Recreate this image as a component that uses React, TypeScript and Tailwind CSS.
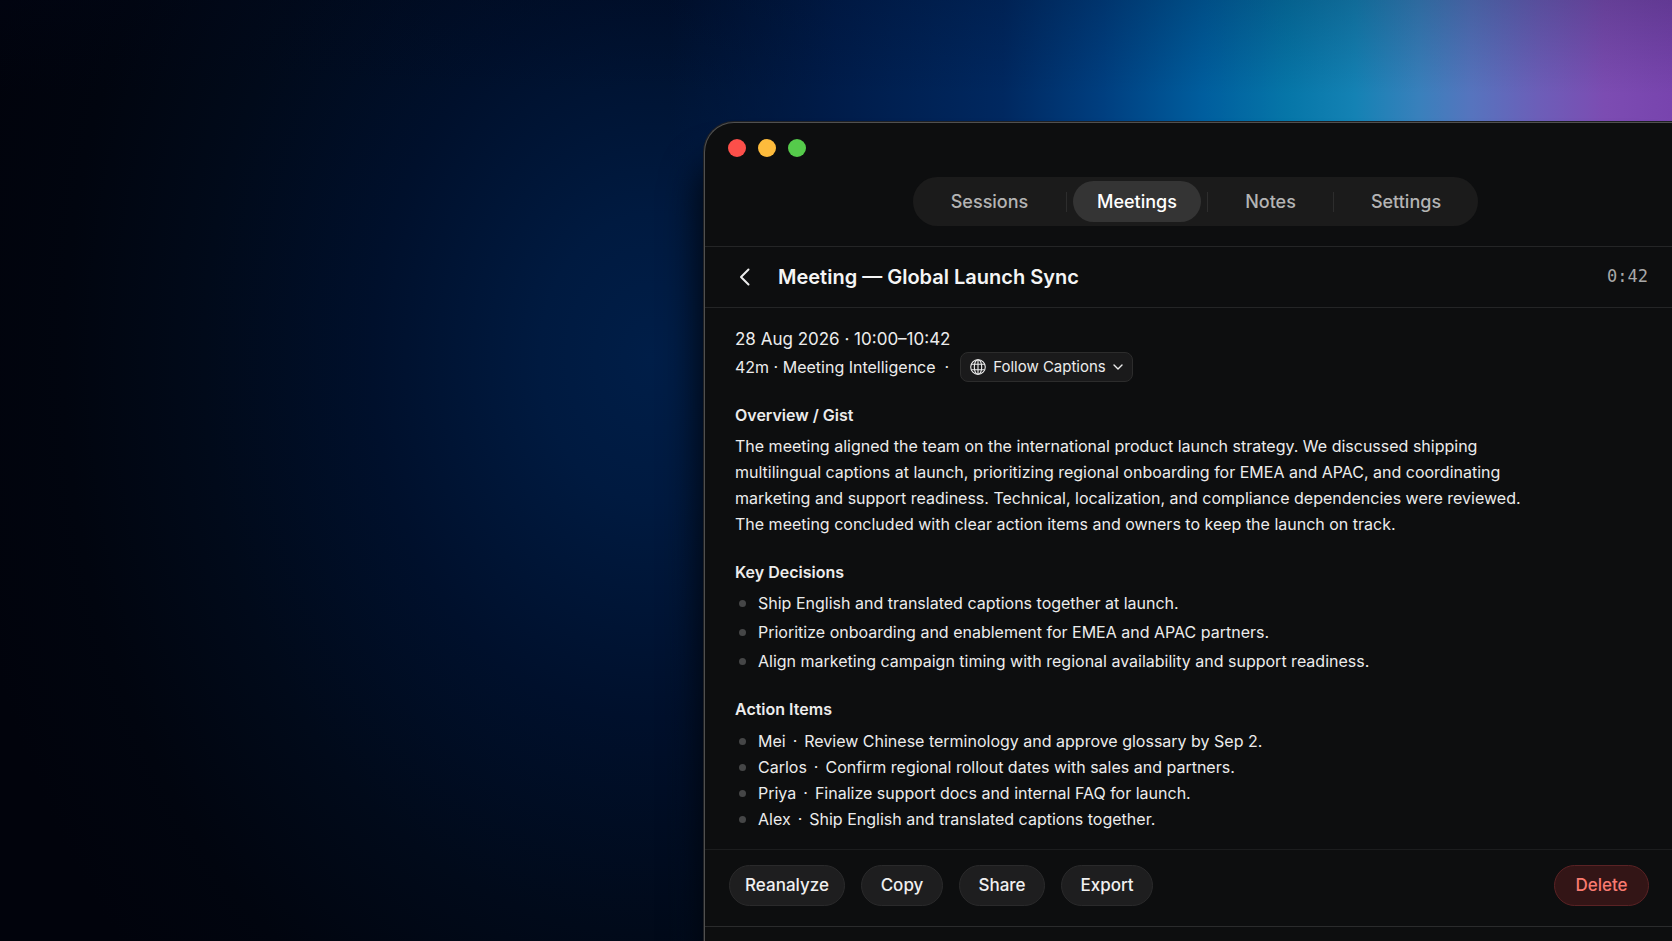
import { useState } from 'react';

const TABS = [
  { name: 'Sessions', width: 'w-[153px]' },
  { name: 'Meetings', width: 'w-[128px]' },
  { name: 'Notes', width: 'w-[125px]' },
  { name: 'Settings', width: 'w-[144px]' },
];

const DECISIONS = [
  'Ship English and translated captions together at launch.',
  'Prioritize onboarding and enablement for EMEA and APAC partners.',
  'Align marketing campaign timing with regional availability and support readiness.',
];

const ACTION_ITEMS = [
  { owner: 'Mei', task: 'Review Chinese terminology and approve glossary by Sep 2.' },
  { owner: 'Carlos', task: 'Confirm regional rollout dates with sales and partners.' },
  { owner: 'Priya', task: 'Finalize support docs and internal FAQ for launch.' },
  { owner: 'Alex', task: 'Ship English and translated captions together.' },
];

const ACTIONS = [
  { name: 'Reanalyze', width: 'w-[116px]' },
  { name: 'Copy', width: 'w-[82px]' },
  { name: 'Share', width: 'w-[86px]' },
  { name: 'Export', width: 'w-[92px]' },
];

function Globe() {
  return (
    <svg viewBox="0 0 16 16" className="h-4 w-4" fill="none" stroke="currentColor" strokeWidth="1.1" aria-hidden="true">
      <circle cx="8" cy="8" r="7.3" />
      <ellipse cx="8" cy="8" rx="3.7" ry="7.3" />
      <path d="M8 .7v14.6M1.4 5.2h13.2M1.4 10.8h13.2" />
    </svg>
  );
}

function Chevron() {
  return (
    <svg viewBox="0 0 10 6" className="h-[6px] w-[10px]" fill="none" stroke="currentColor" strokeWidth="1.4" strokeLinecap="round" strokeLinejoin="round" aria-hidden="true">
      <path d="M1 1l4 4 4-4" />
    </svg>
  );
}

function Bullet() {
  return <span className="ml-1 mr-3 h-[7px] w-[7px] shrink-0 rounded-full bg-[#454647]" />;
}

export default function App() {
  const [tab, setTab] = useState('Meetings');

  return (
    <div className="flex min-h-screen flex-col overflow-hidden bg-[#01030c] bg-[linear-gradient(180deg,#00082030_0%,transparent_10%),linear-gradient(90deg,transparent_40%,#001c4a_50%,#002860_60%,#003f80_66%,#005e9e_72%,#0676a8_77%,#1482b4_81%,#3a80bc_85%,#5674be_88%,#6c5eb8_92%,#7c4cb2_96%,#7844ae_100%),radial-gradient(ellipse_700px_900px_at_39%_38%,#001e48_0%,#001a40_16%,#00102c_40%,#010a1a_64%,#01050f_84%,transparent_100%)] pl-8 pt-[122px] font-['Inter',sans-serif] text-[#ececec] antialiased lg:pl-[704px]">
      <main className="flex flex-1 flex-col rounded-tl-[30px] border-l border-t border-[#505050] bg-[#0d0e0f] shadow-[0_0_0_1px_#1e2024,-6px_40px_36px_0_#000000c0]">
        <header className="border-b border-[#242526]">
          <div className="flex gap-3 px-[23px] pt-4">
            <button aria-label="Close" className="h-[18px] w-[18px] rounded-full bg-[#fc4f4a]" />
            <button aria-label="Minimize" className="h-[18px] w-[18px] rounded-full bg-[#fdbb3c]" />
            <button aria-label="Zoom" className="h-[18px] w-[18px] rounded-full bg-[#55cb4b]" />
          </div>
          <div className="flex justify-center py-5 pl-3.5">
            <nav className="flex h-[49px] items-center rounded-full bg-[#1b1b1b]">
              {TABS.map((t, i) => (
                <div key={t.name} className="flex items-center">
                  {i > 0 && <span className={`h-5 w-px bg-[#2d2d2d] ${i === 1 ? 'mr-1.5' : i === 2 ? 'ml-1.5' : ''}`} />}
                  <button
                    onClick={() => setTab(t.name)}
                    className={`h-[41px] rounded-full text-lg font-medium ${t.width} ${tab === t.name ? 'bg-[#343434] text-white' : 'text-[#b4b4b4]'}`}
                  >
                    {t.name}
                  </button>
                </div>
              ))}
            </nav>
          </div>
        </header>

        <div className="flex h-[61px] items-center border-b border-[#242526] pl-[34px] pr-6">
          <button aria-label="Back" className="text-[#ececec]">
            <svg viewBox="0 0 12 18" className="h-[18px] w-3" fill="none" stroke="currentColor" strokeWidth="2" strokeLinecap="round" strokeLinejoin="round">
              <path d="M9.5 1.5L2 9l7.5 7.5" />
            </svg>
          </button>
          <h1 className="ml-[27px] text-xl font-semibold text-[#f5f5f5]">Meeting — Global Launch Sync</h1>
          <time className="ml-auto font-['DejaVu_Sans_Mono',monospace] text-[17px] text-[#a8a8a8]">0:42</time>
        </div>

        <article className="px-[30px] pb-[17px] pt-[18px] text-base/[26px]">
          <p className="text-[17px]/[26px]">28 Aug 2026 · 10:00–10:42</p>
          <div className="flex items-center">
            <p className="whitespace-pre">42m · Meeting Intelligence  ·</p>
            <button className="ml-[11px] flex h-[30px] items-center gap-[7px] rounded-lg border border-[#2c2c2c] bg-[#1a1a1b] px-[9px] text-[15px]">
              <Globe />
              Follow Captions
              <Chevron />
            </button>
          </div>

          <section className="mt-5">
            <h2 className="font-semibold">Overview / Gist</h2>
            <p className="mt-[5px] max-w-[790px]">
              The meeting aligned the team on the international product launch strategy. We discussed shipping
              multilingual captions at launch, prioritizing regional onboarding for EMEA and APAC, and coordinating
              marketing and support readiness. Technical, localization, and compliance dependencies were reviewed.
              The meeting concluded with clear action items and owners to keep the launch on track.
            </p>
          </section>

          <section className="mt-[22px]">
            <h2 className="font-semibold">Key Decisions</h2>
            <ul className="mt-1">
              {DECISIONS.map(text => (
                <li key={text} className="flex items-center leading-[29px]">
                  <Bullet />
                  {text}
                </li>
              ))}
            </ul>
          </section>

          <section className="mt-5">
            <h2 className="font-semibold">Action Items</h2>
            <ul className="mt-1.5">
              {ACTION_ITEMS.map(item => (
                <li key={item.owner} className="flex items-center">
                  <Bullet />
                  {item.owner}
                  <span className="mx-[7px]">·</span>
                  {item.task}
                </li>
              ))}
            </ul>
          </section>
        </article>

        <footer className="flex items-center gap-4 border-b border-t border-b-[#2a2b2c] border-t-[#1c1d1e] pb-5 pl-6 pr-[23px] pt-[15px] text-[17px] font-medium">
          {ACTIONS.map(action => (
            <button key={action.name} className={`h-[41px] rounded-full border border-[#2a2a2b] bg-[#1e1e1f] text-[#f0f0f0] ${action.width}`}>
              {action.name}
            </button>
          ))}
          <button className="ml-auto h-[41px] w-[95px] rounded-full border border-[#5a2224] bg-[#331516] text-[#f87a70]">Delete</button>
        </footer>
      </main>
    </div>
  );
}
